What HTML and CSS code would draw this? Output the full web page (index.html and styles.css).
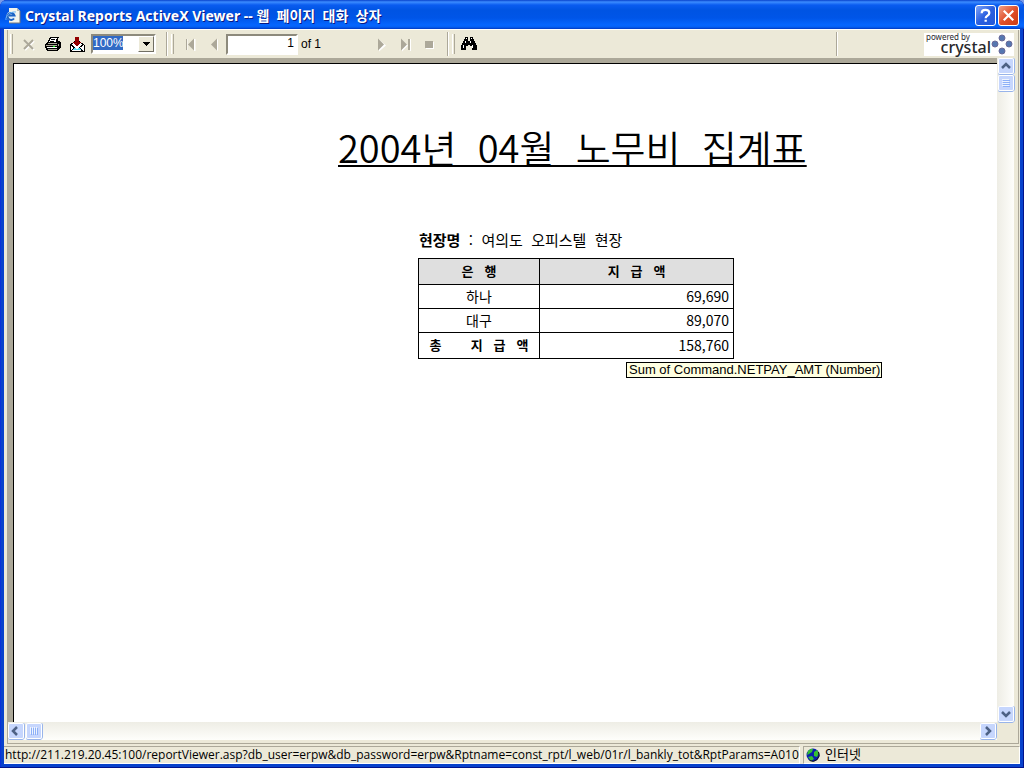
FILE: index.html
```html
<!DOCTYPE html>
<html lang="ko">
<head>
<meta charset="utf-8">
<title>Crystal Reports ActiveX Viewer</title>
<link rel="stylesheet" href="styles.css">
</head>
<body>
<div class="window">
  <header class="titlebar">
    <svg class="app-icon" viewBox="0 0 16 16" width="16" height="16"><path d="M4 0h8l3 3v12H4z" fill="#f4f4ec"/><path d="M12 0v3h3z" fill="#b8b8b0"/><path d="M15 3v12H4" fill="none" stroke="#77777a"/><circle cx="6" cy="8" r="4.500" fill="#dcebfa"/><path d="M9 10.500a3.500 3.500 0 1 1 .5-3H4" fill="none" stroke="#1b62c4" stroke-width="2"/><path d="M1 12C0 8 6 3 11 4" fill="none" stroke="#69b4f4"/></svg>
    <h1 class="title">Crystal Reports ActiveX Viewer -- 웹&nbsp; 페이지&nbsp; 대화&nbsp; 상자</h1>
    <button class="caption help" type="button" aria-label="도움말"><svg viewBox="0 0 20 20" width="19" height="19"><path d="M6 7.500q0-3.500 4-3.500t4 3.300q0 2-2.300 3.200-1.500.8-1.500 2.500M10.200 14.500v2.200" fill="none" stroke="#fff" stroke-width="2.400"/></svg></button>
    <button class="caption close" type="button" aria-label="닫기"><svg viewBox="0 0 20 20" width="19" height="19"><path d="M5 5l10 10M15 5L5 15" stroke="#fff" stroke-width="2.300"/></svg></button>
  </header>

  <main class="client">
    <div class="viewer">
      <div class="toolbar">
        <span class="grip"></span>
        <button class="tool" type="button" aria-label="닫기"><svg viewBox="0 0 16 16" width="16" height="16"><path d="M4 5l9 9M13 5l-9 9" stroke="#fff" stroke-width="2"/><path d="M3 4l9 9M12 4l-9 9" stroke="#aca899" stroke-width="2"/></svg></button>
        <button class="tool" type="button" aria-label="인쇄"><svg viewBox="0 0 16 16" width="16" height="16" shape-rendering="crispEdges"><path d="M5 1h9v1h-1v3h2v1h1v6h-1v1h-1v1h-1v1H2v-1H1v-2H0V8h1V7h1V6h1V4h1V2h1z" fill="#000"/><path d="M6 2h6v1h-1v3H4V5h1V3h1z" fill="#fff"/><path d="M6 3h4v1H6zM5 5h4v1H5z" fill="#000"/><path d="M3 7h9v1H3zM1 9h11v1H1zM13 8h1v2h-1zM3 13h9v1H3z" fill="#aca899"/><path d="M2 11h10v1H2z" fill="#fff"/><path d="M8 10h2v1H8z" fill="#0d0"/></svg></button>
        <button class="tool" type="button" aria-label="내보내기"><svg viewBox="0 0 16 16" width="16" height="16" shape-rendering="crispEdges"><path d="M8 4l7 5v6H1V9z" fill="#fff" stroke="#000"/><path d="M2 9l4 3-4 3M14 9l-4 3 4 3M6 12l2 2 2-2" fill="none" stroke="#000"/><path d="M3 14l3-2 2 1 2-1 3 2z" fill="#55ddec"/><path d="M6 1h4v5h2v1h-1v1h-1v1H9v1H7V9H6V8H5V7H4V6h2z" fill="#930000"/></svg></button>
        <div class="zoom">
          <input class="zoom-text" type="text" value="100%" aria-label="확대 비율">
          <button class="drop" type="button" aria-label="확대 비율 목록"><svg viewBox="0 0 7 4" width="7" height="4" shape-rendering="crispEdges"><path d="M0 0h7L3.500 4z"/></svg></button>
        </div>
        <span class="divider gap"></span><span class="grip"></span>
        <button class="tool" type="button" aria-label="처음"><svg viewBox="0 0 16 16" width="16" height="16"><path d="M5 3v11M13 3v12L7 9z" fill="#fff" stroke="#fff"/><path d="M4 3h1v11H4zM12 2.500v12L6 8.500z" fill="#aca899"/></svg></button>
        <button class="tool prev" type="button" aria-label="이전"><svg viewBox="0 0 16 16" width="16" height="16"><path d="M12 3v12L6 9z" fill="#fff"/><path d="M11 2.500v12l-6-6z" fill="#aca899"/></svg></button>
        <input class="page-no" type="text" value="1" aria-label="페이지">
        <span class="page-total">of 1</span>
        <button class="tool" type="button" aria-label="다음"><svg viewBox="0 0 16 16" width="16" height="16"><path d="M6 3.500v12l7-6z" fill="#fff"/><path d="M5 2.500v12l6-6z" fill="#aca899"/></svg></button>
        <button class="tool" type="button" aria-label="마지막"><svg viewBox="0 0 16 16" width="16" height="16"><path d="M5 3.500v12l6-6zM13 3h1v12h-1z" fill="#fff"/><path d="M4 2.500v12l6-6zM11 3h2v11h-2z" fill="#aca899"/></svg></button>
        <button class="tool stop" type="button" aria-label="중지"><svg viewBox="0 0 16 16" width="16" height="16"><path d="M5 6h8v7H5z" fill="#fff"/><path d="M4 5h8v7H4z" fill="#aca899"/></svg></button>
        <span class="divider"></span><span class="grip"></span>
        <button class="tool find" type="button" aria-label="찾기"><svg viewBox="0 0 16 16" width="16" height="16" shape-rendering="crispEdges"><path d="M4 1h3v4h2V1h3v2h1v2h1v2h1v2h1v5h-5v-4H9V9H7v1H5v4H0V9h1V7h1V5h1V3h1z"/><path d="M5 2h1v1H5zM10 2h1v1h-1zM4 5h1v2H4zM9 5h1v2H9zM2 9h1v3H2zM11 9h1v3h-1z" fill="#fff"/></svg></button>
        <span class="divider right"></span>
        <div class="brand">
          <div class="brand-text"><span class="powered">powered by</span><span class="crystal">crystal</span></div>
          <svg viewBox="0 0 22 22" width="22" height="22" fill="#5577b0" stroke="#6a6a98"><circle cx="11" cy="5" r="3"/><circle cx="4" cy="11" r="3"/><circle cx="18" cy="11" r="3"/><circle cx="11" cy="18" r="3"/></svg>
        </div>
      </div>

      <div class="viewport">
        <div class="canvas">
          <article class="report">
            <h2 class="report-title">2004년&nbsp; 04월&nbsp; 노무비&nbsp; 집계표</h2>
            <p class="site"><b>현장명</b>&nbsp; :&nbsp; 여의도&nbsp; 오피스텔&nbsp; 현장</p>
            <div class="table-wrap">
              <table class="totals">
                <thead><tr><th>은&nbsp;&nbsp; 행</th><th>지&nbsp;&nbsp; 급&nbsp;&nbsp; 액</th></tr></thead>
                <tbody>
                  <tr><td>하나</td><td class="num">69,690</td></tr>
                  <tr><td>대구</td><td class="num">89,070</td></tr>
                </tbody>
                <tfoot><tr><th>총&nbsp;&nbsp;&nbsp;&nbsp;&nbsp;&nbsp;&nbsp; 지&nbsp;&nbsp; 급&nbsp;&nbsp; 액</th><td class="num">158,760</td></tr></tfoot>
              </table>
              <div class="tooltip" role="tooltip">Sum of Command.NETPAY_AMT (Number)</div>
            </div>
          </article>
        </div>
        <div class="vscroll">
          <button class="sb" type="button" aria-label="위로"><svg viewBox="0 0 16 16" width="16" height="16"><path d="M4 10l4-4 4 4" fill="none" stroke="#4d6185" stroke-width="2.500"/></svg></button>
          <span class="sb"><svg viewBox="0 0 16 16" width="16" height="16" shape-rendering="crispEdges"><path d="M4 4h7v1H4zM4 6h7v1H4zM4 8h7v1H4zM4 10h7v1H4z" fill="#eef4fe"/><path d="M5 5h7v1H5zM5 7h7v1H5zM5 9h7v1H5zM5 11h7v1H5z" fill="#8cb0f8"/></svg></span>
          <button class="sb last" type="button" aria-label="아래로"><svg viewBox="0 0 16 16" width="16" height="16"><path d="M4 6l4 4 4-4" fill="none" stroke="#4d6185" stroke-width="2.500"/></svg></button>
        </div>
      </div>
      <div class="hscroll">
        <button class="sb" type="button" aria-label="왼쪽"><svg viewBox="0 0 16 16" width="16" height="16"><path d="M9 4L5 8l4 4" fill="none" stroke="#4d6185" stroke-width="2.500"/></svg></button>
        <span class="sb"><svg viewBox="0 0 16 16" width="16" height="16" shape-rendering="crispEdges"><path d="M4 4h1v7H4zM6 4h1v7H6zM8 4h1v7H8zM10 4h1v7h-1z" fill="#eef4fe"/><path d="M5 5h1v7H5zM7 5h1v7H7zM9 5h1v7H9zM11 5h1v7h-1z" fill="#8cb0f8"/></svg></span>
        <button class="sb last" type="button" aria-label="오른쪽"><svg viewBox="0 0 16 16" width="16" height="16"><path d="M6 4l4 4-4 4" fill="none" stroke="#4d6185" stroke-width="2.500"/></svg></button>
      </div>
    </div>
  </main>

  <footer class="status">
    <div class="pane url">http://211.219.20.45:100/reportViewer.asp?db_user=erpw&amp;db_password=erpw&amp;Rptname=const_rpt/l_web/01r/l_bankly_tot&amp;RptParams=A010</div>
    <div class="pane zone"><svg viewBox="0 0 14 14" width="14" height="14"><circle cx="7" cy="7" r="6.500" fill="#0a1fae"/><path d="M2 3q3-3 5-2l-1 3-3 2-2 1zM8 4l3-2 2 3-2 4-3-1zM2 9l4-1 2 3-3 2z" fill="#35c032"/><path d="M12.500 4a6.500 6.500 0 0 1-9 8.500" fill="none" stroke="#111"/></svg><span>인터넷</span></div>
  </footer>
</div>
</body>
</html>
```
FILE: styles.css
```css
* { box-sizing: border-box; }
body {
  margin: 0;
  font: 12px/16px "Liberation Sans", "Noto Sans CJK KR", sans-serif;
  color: #000;
  background: #7a9be8;
}
button { padding: 0; border: 0; background: none; }
input { font: inherit; border-radius: 0; outline: 0; }
svg { display: block; flex: none; }

.window {
  display: flex;
  flex-direction: column;
  height: 100vh;
  padding: 0 4px 4px;
  border-radius: 7px 7px 0 0;
  background: #0842cc;
  box-shadow: inset 0 -1px #00138c, inset 1px 0 #0831d9, inset -1px 0 #00138c;
  overflow: hidden;
}
.titlebar {
  display: flex;
  align-items: center;
  gap: 2px;
  height: 29px;
  margin: 0 -4px;
  padding: 2px 5px 0;
  background: linear-gradient(#0842cc 0, #3c8cff 2px, #0a5cf0 5px, #0054e3 10px, #0055e8 18px, #0566ff 25px, #0560f4 27px, #0038c0 29px);
}
.title {
  flex: 1;
  margin: 0 0 0 2px;
  color: #fff;
  font: bold 14px/18px "Noto Sans", "Noto Sans CJK KR", sans-serif;
  text-shadow: 1px 1px #0a1883;
  white-space: nowrap;
}
.caption {
  width: 21px;
  height: 21px;
  border: 1px solid #fff;
  border-radius: 3px;
}
.help { background: linear-gradient(135deg, #7fa4f8, #2a5fe0 50%, #2257d8); }
.close { background: linear-gradient(135deg, #f0a088, #e0502c 50%, #cc3a10); }

.client {
  flex: 1;
  min-height: 0;
  display: flex;
  padding: 0 1px 0 3px;
  background: #ece9d8;
  border-top: 1px solid #fff;
}
.viewer {
  flex: 1;
  min-width: 0;
  display: flex;
  flex-direction: column;
  margin-bottom: 1px;
  padding: 0 4px 3px 0;
  border-left: 1px solid #aca899;
  border-right: 1px solid #aca899;
  border-bottom: 1px solid #aca899;
}
.toolbar {
  display: flex;
  align-items: center;
  height: 28px;
  padding: 2px 0 2px 2px;
}
.grip {
  width: 3px;
  height: 20px;
  margin: 0 8px 0 0;
  border-left: 1px solid #fff;
  border-right: 1px solid #aca899;
}
.divider {
  width: 2px;
  height: 24px;
  margin: 0 3px 0 2px;
  border-left: 1px solid #aca899;
  border-right: 1px solid #fff;
}
.divider.gap { margin-left: 10px; }
.divider.right { margin: 0 86px 0 auto; }
.tool { width: 16px; height: 16px; margin-right: 8px; }
.tool.prev { margin-right: 4px; }
.tool.find { margin: 0 0 0 -2px; }
.zoom {
  display: flex;
  width: 65px;
  height: 20px;
  margin-left: -2px;
  border: 2px solid;
  border-color: #8d8a7c #fff #fff #8d8a7c;
  background: #fff;
}
.zoom-text {
  width: 30px;
  height: 14px;
  padding: 0;
  border: 0;
  background: #316ac5;
  color: #fff;
}
.drop {
  display: grid;
  place-items: center;
  width: 16px;
  margin-left: auto;
  background: #ece9d8;
  border: 1px solid;
  border-color: #fff #716f64 #716f64 #fff;
}
.page-no {
  width: 72px;
  height: 21px;
  padding: 0 2px 2px 0;
  border: 2px solid;
  border-color: #8d8a7c #fff #fff #8d8a7c;
  text-align: right;
}
.page-total { width: 69px; margin: 0 3px; }
.brand {
  display: flex;
  flex: none;
  align-items: center;
  width: 90px;
  height: 23px;
  background: #fff;
}
.brand-text {
  display: flex;
  flex-direction: column;
  width: 67px;
  padding-left: 2px;
  color: #28282c;
  font-family: "Noto Sans", sans-serif;
}
.powered { font-size: 8px; line-height: 7px; }
.crystal { align-self: flex-end; font-size: 16px; line-height: 15px; font-weight: 500; }

.viewport { flex: 1; min-height: 0; display: flex; }
.canvas {
  flex: 1;
  min-width: 0;
  padding: 5px 0 0 5px;
  background: #aca899;
}
.report {
  height: 100%;
  padding: 61px 0 0 324px;
  border-top: 1px solid #000;
  border-left: 1px solid #000;
  background: #fff;
}
.report-title {
  width: max-content;
  margin: 0;
  font: 350 38px/44px "Noto Sans CJK KR", sans-serif;
  text-decoration: underline 2px;
  text-underline-offset: 2px;
  text-decoration-skip-ink: none;
  white-space: nowrap;
}
.site {
  margin: 61px 0 8px 81px;
  font: 15px/20px "Noto Sans CJK KR", sans-serif;
}
.table-wrap { position: relative; width: 316px; margin-left: 80px; }
.totals {
  width: 100%;
  table-layout: fixed;
  border-collapse: collapse;
  font: 14px/18px "Noto Sans CJK KR", sans-serif;
}
.totals th, .totals td {
  height: 24px;
  padding: 0 4px 2px;
  border: 1px solid #000;
  text-align: center;
}
.totals th { height: 26px; font-size: 13px; }
.totals th:first-child { width: 121px; }
.totals thead th { background: #dfdfdf; }
.totals .num { text-align: right; }
.tooltip {
  position: absolute;
  top: 104px;
  left: 208px;
  padding: 0 1px 0 2px;
  border: 1px solid #000;
  background: #ffffe1;
  line-height: 14px;
  font-size: 13px;
  white-space: nowrap;
}

.sb {
  display: block;
  flex: none;
  width: 16px;
  height: 16px;
  border-radius: 2px;
  background: #c6d6fd;
  box-shadow: inset 0 0 0 1px #fff, 0 1px #98b4ea, 1px 0 #98b4ea;
}
.vscroll {
  display: flex;
  flex-direction: column;
  gap: 1px;
  width: 17px;
  padding: 0 0 0 1px;
  background: linear-gradient(90deg, #eeede5, #fefefb);
}
.hscroll {
  display: flex;
  gap: 2px;
  height: 18px;
  margin-right: 17px;
  padding: 1px 1px 1px 0;
  background: linear-gradient(#eeede5, #fefefb);
}
.hscroll .last { margin-left: auto; }
.vscroll .last { margin-top: auto; }

.status {
  display: flex;
  gap: 3px;
  height: 19px;
  padding-top: 1px;
  background: #ece9d8;
}
.pane {
  display: flex;
  align-items: center;
  gap: 5px;
  border-top: 1px solid #aca899;
  border-right: 1px solid #fff;
  border-bottom: 1px solid #fff;
  white-space: nowrap;
  overflow: hidden;
}
.url { flex: 1; min-width: 0; padding-left: 1px; font-family: "Open Sans", sans-serif; }
.zone { width: 217px; padding-left: 2px; border-left: 1px solid #aca899; font-size: 13px; }
```
